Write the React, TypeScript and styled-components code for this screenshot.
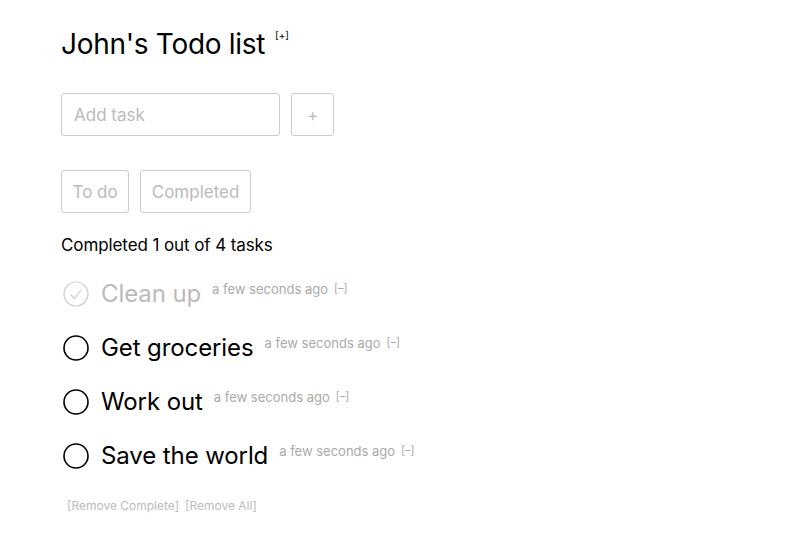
import styled, { createGlobalStyle } from "styled-components";

const GlobalStyle = createGlobalStyle`
  body {
    margin: 0;
    background: #fff;
    font-family: Inter, "Liberation Sans", sans-serif;
    color: #000;
  }
`;

const Page = styled.div`
  padding: 24px 61px;
  display: flex;
  flex-direction: column;
`;

const Header = styled.div`
  display: flex;
  align-items: flex-start;
  gap: 10px;
`;

const Title = styled.h1`
  font-size: 28px;
  font-weight: 400;
  margin: 0;
  line-height: 40px;
  letter-spacing: -0.3px;
`;

const SmallLink = styled.span<{ $size?: number; $color?: string }>`
  font-size: ${({ $size }) => $size ?? 11}px;
  color: ${({ $color }) => $color ?? "#000"};
  cursor: pointer;
`;

const TopLink = styled(SmallLink)`
  margin-top: 5px;
`;

const AddRow = styled.div`
  display: flex;
  gap: 11px;
  margin-top: 29px;
`;

const Input = styled.input`
  width: 219px;
  height: 43px;
  box-sizing: border-box;
  border: 1px solid #ccc;
  border-radius: 3px;
  padding: 0 12px;
  font-family: inherit;
  font-size: 17px;
  outline: none;
  &::placeholder {
    color: #bbb;
  }
`;

const Button = styled.button`
  height: 43px;
  min-width: 43px;
  box-sizing: border-box;
  border: 1px solid #ccc;
  border-radius: 3px;
  background: #fff;
  color: #bbb;
  font-family: inherit;
  font-size: 17px;
  padding: 0 10.5px;
  cursor: pointer;
`;

const FilterRow = styled.div`
  display: flex;
  gap: 11px;
  margin-top: 34px;
`;

const Summary = styled.div`
  font-size: 17px;
  margin-top: 22px;
  line-height: 20px;
  letter-spacing: -0.1px;
`;

const List = styled.ul`
  list-style: none;
  padding: 0;
  margin: 22px 0 0;
  display: flex;
  flex-direction: column;
  gap: 20px;
`;

const Item = styled.li<{ $done: boolean }>`
  display: flex;
  align-items: center;
  height: 34px;
  color: ${({ $done }) => ($done ? "#bbb" : "#000")};
`;

const Check = styled.span<{ $done: boolean }>`
  width: 26px;
  height: 26px;
  margin-left: 2px;
  display: flex;
  align-items: center;
  justify-content: center;
  color: ${({ $done }) => ($done ? "#ccc" : "#000")};
`;

const Label = styled.span`
  font-size: 24px;
  margin-left: 12px;
  line-height: 34px;
  letter-spacing: -0.1px;
`;

const Meta = styled.span`
  font-size: 13px;
  color: #aaa;
  margin-left: 11px;
  align-self: flex-start;
  margin-top: 4px;
  display: flex;
  gap: 6px;
`;

const Footer = styled.div`
  display: flex;
  gap: 6px;
  margin-top: 25px;
  padding-left: 6px;
`;

const tasks = [
  { title: "Clean up", done: true },
  { title: "Get groceries", done: false },
  { title: "Work out", done: false },
  { title: "Save the world", done: false },
];

const CircleIcon = ({ done }: { done: boolean }) => (
  <svg width="26" height="26" viewBox="0 0 26 26" fill="none" stroke="currentColor">
    <circle cx="13" cy="13" r="12" strokeWidth={done ? 1.2 : 1.6} />
    {done && <path d="M7.5 13.5 L11.5 17.5 L18.5 8.5" strokeWidth={1.2} />}
  </svg>
);

export default function App() {
  const completed = tasks.filter((t) => t.done).length;
  return (
    <>
      <GlobalStyle />
      <Page>
        <Header>
          <Title>John's Todo list</Title>
          <TopLink $size={10}>[+]</TopLink>
        </Header>
        <AddRow>
          <Input placeholder="Add task" />
          <Button>+</Button>
        </AddRow>
        <FilterRow>
          <Button>To do</Button>
          <Button>Completed</Button>
        </FilterRow>
        <Summary>
          Completed {completed} out of {tasks.length} tasks
        </Summary>
        <List>
          {tasks.map((t) => (
            <Item key={t.title} $done={t.done}>
              <Check $done={t.done}>
                <CircleIcon done={t.done} />
              </Check>
              <Label>{t.title}</Label>
              <Meta>
                <span>a few seconds ago</span>
                <SmallLink $size={11} $color="#aaa">[–]</SmallLink>
              </Meta>
            </Item>
          ))}
        </List>
        <Footer>
          <SmallLink $size={12} $color="#bbb">[Remove Complete]</SmallLink>
          <SmallLink $size={12} $color="#bbb">[Remove All]</SmallLink>
        </Footer>
      </Page>
    </>
  );
}
